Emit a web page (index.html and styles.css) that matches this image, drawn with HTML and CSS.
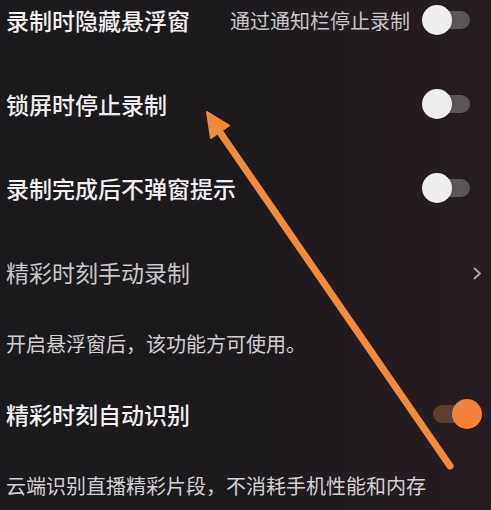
FILE: index.html
```html
<!DOCTYPE html>
<html lang="zh-CN">
<head>
<meta charset="utf-8">
<title>录制设置</title>
<link rel="stylesheet" href="styles.css">
</head>
<body>
<main class="list">
  <div class="row">
    <span class="title">录制时隐藏悬浮窗</span>
    <span class="right">
      <span class="sub">通过通知栏停止录制</span>
      <span class="toggle off"><span class="track"></span><span class="knob"></span></span>
    </span>
  </div>
  <div class="row gap">
    <span class="title">锁屏时停止录制</span>
    <span class="toggle off"><span class="track"></span><span class="knob"></span></span>
  </div>
  <div class="row gap">
    <span class="title">录制完成后不弹窗提示</span>
    <span class="toggle off"><span class="track"></span><span class="knob"></span></span>
  </div>
  <div class="row gap link">
    <span class="title dim">精彩时刻手动录制</span>
    <svg class="chev" width="9" height="13" viewBox="0 0 9 13"><polyline points="1.5,1.5 7,6.5 1.5,11.5" fill="none" stroke="#a9a6a8" stroke-width="2" stroke-linecap="round" stroke-linejoin="round"/></svg>
  </div>
  <div class="row note">开启悬浮窗后，该功能方可使用。</div>
  <div class="row note-gap">
    <span class="title">精彩时刻自动识别</span>
    <span class="toggle on"><span class="track"></span><span class="knob"></span></span>
  </div>
  <div class="row note">云端识别直播精彩片段，不消耗手机性能和内存</div>
</main>
<svg class="arrow" width="491" height="510" viewBox="0 0 491 510">
  <line x1="450" y1="466" x2="217" y2="128" stroke="#f28b38" stroke-width="7" stroke-linecap="round"/>
  <polygon points="207,112 229,125.5 211,138" fill="#f28b38" stroke="#f28b38" stroke-width="2" stroke-linejoin="round"/>
</svg>
</body>
</html>
```
FILE: styles.css
```css
html, body {
  margin: 0;
  padding: 0;
}
body {
  width: 491px;
  height: 510px;
  overflow: hidden;
  background: linear-gradient(90deg, #1b1a1d 0%, #1c1a1d 50%, #241c20 80%, #261d22 100%);
  font-family: "Noto Sans CJK SC", "Noto Sans", sans-serif;
  position: relative;
}
.list {
  display: flex;
  flex-direction: column;
}
.row {
  height: 40px;
  display: flex;
  align-items: center;
  justify-content: space-between;
  padding-left: 6px;
  padding-right: 21px;
}
.row.gap {
  margin-top: 44px;
}
.row.note-gap {
  margin-top: 31px;
  padding-right: 9px;
}
.row.link {
  padding-right: 9px;
}
.row.note {
  margin-top: 31px;
  font-size: 20px;
  color: #d2d0d1;
  justify-content: flex-start;
}
.title {
  font-size: 23px;
  font-weight: 500;
  color: #f1eff0;
  white-space: nowrap;
}
.title.dim {
  color: #c9c7c8;
  font-weight: 400;
}
.right {
  display: flex;
  align-items: center;
  gap: 12px;
}
.sub {
  font-size: 20px;
  color: #c8c6c7;
}
.toggle {
  position: relative;
  display: block;
  height: 30px;
}
.toggle.off {
  width: 48px;
}
.toggle.on {
  width: 49px;
}
.track {
  position: absolute;
  top: 6px;
  height: 18px;
  border-radius: 9px;
}
.toggle.off .track {
  left: 6px;
  right: 0;
  background: #5a5658;
}
.toggle.on .track {
  left: 0;
  right: 12px;
  background: #5b3f2f;
}
.knob {
  position: absolute;
  top: 0;
  width: 30px;
  height: 30px;
  border-radius: 50%;
}
.toggle.off .knob {
  left: 0;
  background: #efedee;
}
.toggle.on .knob {
  right: 0;
  background: #f5813a;
}
.chev {
  display: block;
  margin-top: 3px;
}
.arrow {
  position: absolute;
  left: 0;
  top: 0;
  pointer-events: none;
}
```
